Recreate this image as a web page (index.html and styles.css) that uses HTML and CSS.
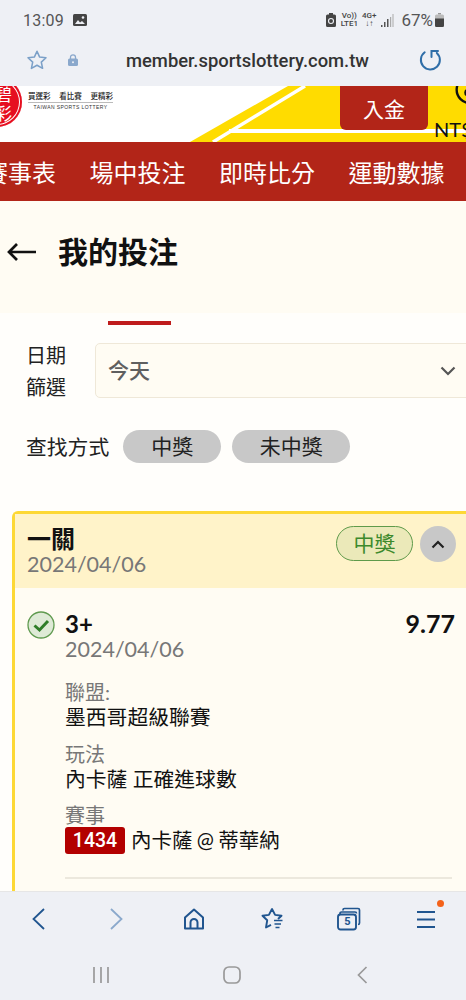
FILE: index.html
```html
<!DOCTYPE html>
<html lang="zh-TW">
<head>
<meta charset="utf-8">
<title>我的投注</title>
<link rel="stylesheet" href="styles.css">
</head>
<body>
<div class="screen">
  <header class="chrome-top">
    <div class="status">
      <span class="clock">13:09</span>
      <svg class="pic" viewBox="0 0 14 12"><rect width="14" height="12" rx="1.5" fill="#444"/><path d="M2 10l3-4 2 2.5 2-1.5 3 3z" fill="#eef0f5"/><circle cx="10" cy="3.5" r="1.3" fill="#eef0f5"/></svg>
      <span class="status-right">
        <svg class="saver" viewBox="0 0 10 14"><path d="M3 0h4v1.500h1.500a1.500 1.500 0 0 1 1.500 1.500v9.500a1.500 1.500 0 0 1-1.500 1.500h-7a1.500 1.500 0 0 1-1.500-1.500v-9.500a1.500 1.500 0 0 1 1.500-1.500h1.500z" fill="#444"/><circle cx="5" cy="8" r="2.500" fill="none" stroke="#eef0f5" stroke-width="1.100"/></svg>
        <span class="net">Vo))<br>LTE1</span>
        <span class="net">4G+<br>↓↑</span>
        <svg class="signal" viewBox="0 0 13 13"><path d="M0 13v-2h1.500v2zM3 13v-5h1.500v5zM6 13v-8h1.500v8z" fill="#555"/><path d="M9 13v-10h1.200v10zM11.500 13v-13h1v13z" fill="#aaa"/></svg>
        <span class="pct">67%</span>
        <svg class="battery" viewBox="0 0 9 14"><path d="M3 0h3v1.500h-3z" fill="#999"/><rect y="1.500" width="9" height="12.500" rx="1.500" fill="#bbb"/><path d="M0 5.500h9v7a1.500 1.500 0 0 1-1.500 1.500h-6a1.500 1.500 0 0 1-1.500-1.500z" fill="#444"/></svg>
      </span>
    </div>
    <div class="urlbar">
      <svg class="star" viewBox="0 0 24 24"><path d="M12 2.500l2.900 6.300 6.900.8-5.100 4.700 1.400 6.800-6.100-3.400-6.100 3.400 1.400-6.800-5.100-4.700 6.900-.8z" fill="none" stroke="#7ba0c8" stroke-width="1.700" stroke-linejoin="round"/></svg>
      <svg class="lock" viewBox="0 0 10 12"><path d="M2.500 5V3.300a2.500 2.500 0 0 1 5 0V5" fill="none" stroke="#8aa8cc" stroke-width="1.300"/><rect y="4.500" width="10" height="7.500" rx="1.500" fill="#8aa8cc"/><circle cx="5" cy="8.200" r="1" fill="#eef0f5"/></svg>
      <span class="url">member.sportslottery.com.tw</span>
      <svg class="reload" viewBox="0 0 22 22"><path d="M5.700 3.300A9.500 9.500 0 1 0 17.800 3.900" fill="none" stroke="#2f6ea8" stroke-width="2" stroke-linecap="round"/><path d="M19 2H12.500V8" fill="none" stroke="#2f6ea8" stroke-width="2" stroke-linecap="round"/></svg>
    </div>
  </header>

  <main class="page">
    <section class="banner">
      <svg class="banner-bg" viewBox="0 0 466 56" preserveAspectRatio="none">
        <path d="M288 0H466V56H190z" fill="#ffdc00"/>
        <path d="M305 0L213 56" stroke="#fff" stroke-width="3.500"/>
        <path d="M229 45H466" stroke="#fff" stroke-width="4"/>
      </svg>
      <div class="seal"><span>碧</span><span>彩</span></div>
      <div class="brand">
        <div class="brand-zh"><span>買運彩</span><span>看比賽</span><span>更精彩</span></div>
        <div class="brand-en">TAIWAN SPORTS LOTTERY</div>
      </div>
      <button class="deposit">入金</button>
      <div class="wallet">
        <svg class="wallet-icon" viewBox="0 0 30 20"><circle cx="16" cy="4" r="14" fill="none" stroke="#111" stroke-width="2.500"/><circle cx="14" cy="7" r="4" fill="#111"/></svg>
        <span class="amount">NT$</span>
      </div>
    </section>

    <nav class="mainnav">
      <a>賽事表</a><a>場中投注</a><a>即時比分</a><a>運動數據</a>
    </nav>

    <section class="title-row">
      <svg class="back-arrow" viewBox="0 0 30 20"><path d="M29 10H2M10 2l-8 8 8 8" fill="none" stroke="#111" stroke-width="2.700"/></svg>
      <h1>我的投注</h1>
    </section>

    <div class="tab-mark"></div>

    <section class="filter">
      <label class="filter-label">日期<br>篩選</label>
      <div class="select">
        <span class="select-value">今天</span>
        <svg class="select-chev" viewBox="0 0 16 10"><path d="M1.500 1.500L8 8l6.500-6.500" fill="none" stroke="#555" stroke-width="2.200"/></svg>
      </div>
    </section>

    <section class="search">
      <span class="search-label">查找方式</span>
      <span class="pill pill-win">中獎</span>
      <span class="pill pill-lose">未中獎</span>
    </section>

    <article class="card">
      <div class="card-head">
        <div class="card-title">
          <strong>一關</strong>
          <span class="date">2024/04/06</span>
        </div>
        <span class="won">中獎</span>
        <span class="toggle"><svg viewBox="0 0 14 9"><path d="M1.500 7.500L7 2l5.500 5.500" fill="none" stroke="#222" stroke-width="2.200"/></svg></span>
      </div>
      <div class="card-body">
        <div class="bet">
          <svg class="check" viewBox="0 0 28 28"><circle cx="14" cy="14" r="13" fill="#deead6" stroke="#5f9a4f" stroke-width="1.300"/><path d="M7.500 14.500l5 4.500 8.500-9" fill="none" stroke="#2f7d28" stroke-width="3"/></svg>
          <div class="bet-main">
            <div class="bet-top"><b class="pick">3+</b><b class="odds">9.77</b></div>
            <span class="date">2024/04/06</span>
            <dl class="details">
              <dt>聯盟:</dt>
              <dd>墨西哥超級聯賽</dd>
              <dt>玩法</dt>
              <dd>內卡薩 正確進球數</dd>
              <dt>賽事</dt>
              <dd class="match"><span class="code">1434</span>內卡薩 @ 蒂華納</dd>
            </dl>
            <hr class="rule">
          </div>
        </div>
      </div>
    </article>
  </main>

  <footer class="chrome-bottom">
    <div class="toolbar">
      <svg class="tool" viewBox="0 0 24 24"><path d="M17 2L6.500 12 17 22" fill="none" stroke="#20558f" stroke-width="1.800"/></svg>
      <svg class="tool" viewBox="0 0 24 24"><path d="M7 2l10.500 10L7 22" fill="none" stroke="#8ba9cc" stroke-width="1.800"/></svg>
      <svg class="tool" viewBox="0 0 24 24"><path d="M3 21.500V10.500L12 2.500l9 8v11z" fill="none" stroke="#20558f" stroke-width="2" stroke-linejoin="round"/><path d="M8.500 21.500v-6a3.500 3.500 0 0 1 7 0v6" fill="none" stroke="#20558f" stroke-width="2"/></svg>
      <svg class="tool" viewBox="0 0 24 24"><path d="M18 12l3.500-3.300-6.400-.8L12 2 8.900 7.900l-6.400.8 4.700 4.600-1.200 7.200 5-2.600" fill="none" stroke="#20558f" stroke-width="1.900" stroke-linejoin="round"/><path d="M14 13.500h8.500M14.500 17h6.500M15.500 20.500h4" stroke="#20558f" stroke-width="1.700"/></svg>
      <span class="tool tabs">
        <svg viewBox="0 0 24 24"><path d="M6 3.500V3a1.500 1.500 0 0 1 1.500-1.500h13.500a1.500 1.500 0 0 1 1.500 1.500v13a1.500 1.500 0 0 1-1.500 1.500M3 7v-.5a1.500 1.500 0 0 1 1.500-1.500h13.500a1.500 1.500 0 0 1 1.500 1.500" fill="none" stroke="#20558f" stroke-width="1.700"/><rect x="1" y="7.500" width="18" height="15" rx="2.500" fill="none" stroke="#20558f" stroke-width="1.900"/></svg>
        <span class="tabs-count">5</span>
      </span>
      <span class="tool menu">
        <svg viewBox="0 0 24 24"><path d="M2 5h18M2 12.500h18M2 20h18" stroke="#20558f" stroke-width="1.900"/></svg>
        <i class="dot"></i>
      </span>
    </div>
    <div class="sysnav">
      <svg class="sys" viewBox="0 0 18 18"><path d="M2 1v16M9 1v16M16 1v16" stroke="#999" stroke-width="1.700"/></svg>
      <svg class="sys" viewBox="0 0 18 18"><rect x="1" y="1" width="16" height="16" rx="5" fill="none" stroke="#999" stroke-width="1.700"/></svg>
      <svg class="sys" viewBox="0 0 18 18"><path d="M12.500 1L4.500 9l8 8" fill="none" stroke="#999" stroke-width="1.700"/></svg>
    </div>
  </footer>
</div>
</body>
</html>
```

FILE: styles.css
```css
* { box-sizing: border-box; }
html, body { margin: 0; padding: 0; }
body {
  width: 466px;
  height: 1000px;
  overflow: hidden;
  background: #fff;
  font-family: Lato, "Noto Sans CJK TC", sans-serif;
  color: #111;
}
.screen { width: 466px; height: 1000px; display: flex; flex-direction: column; overflow: hidden; }

/* browser top */
.chrome-top { height: 86px; flex: none; background: #eef0f5; font-family: Roboto, sans-serif; }
.status { height: 40px; display: flex; align-items: center; padding: 0 22px 0 23px; color: #555; }
.clock { font-size: 16px; letter-spacing: .2px; }
.pic { width: 14px; height: 12px; margin-left: 9px; }
.status-right { margin-left: auto; display: flex; align-items: center; }
.saver { width: 10px; height: 14px; margin-right: 5px; }
.net { font-size: 8px; line-height: 8px; color: #444; text-align: center; margin-right: 4px; font-weight: 500; }
.signal { width: 13px; height: 13px; margin: 0 7px 0 1px; }
.pct { font-size: 17px; color: #555; }
.battery { width: 9px; height: 14px; margin-left: 2px; }
.urlbar { height: 40px; display: flex; align-items: center; padding: 0 25px 0 26px; }
.star { width: 22px; height: 22px; flex: none; }
.lock { width: 10px; height: 12px; margin-left: 20px; flex: none; }
.url { margin-left: 48px; font-size: 18.400px; font-weight: 500; color: #333; white-space: nowrap; }
.reload { width: 22px; height: 22px; margin-left: auto; flex: none; }

/* page */
.page { flex: 1; min-height: 0; overflow: hidden; background: #fffefb; }

.banner { position: relative; height: 56px; display: flex; background: #fff; overflow: hidden; }
.banner-bg { position: absolute; left: 0; top: 0; width: 466px; height: 56px; }
.seal {
  position: absolute; left: -28px; top: -9px;
  width: 50px; height: 50px; border-radius: 50%;
  background: #e60f20; color: #fff;
  box-shadow: inset 0 0 0 2px #e60f20, inset 0 0 0 3px #fff;
  display: flex; flex-direction: column; align-items: flex-end; justify-content: center;
  font-size: 17px; line-height: 19px; padding: 4px 10px 0 0;
}
.brand { position: relative; margin: 5px 0 0 28px; width: 85px; flex: none; }
.brand-zh { display: flex; justify-content: space-between; font-size: 7.500px; line-height: 11px; border-bottom: 1px solid #bbb; height: 12px; color: #222; font-weight: 500; }
.brand-en { font-family: "Liberation Sans", sans-serif; font-size: 5px; line-height: 8px; letter-spacing: .42px; text-align: center; color: #333; white-space: nowrap; }
.deposit {
  position: relative; margin-left: 227px; flex: none;
  width: 88px; height: 44px; border: 0; padding: 0;
  border-radius: 0 0 6px 6px; background: #b22518; color: #fff;
  font-family: "Noto Sans CJK TC", sans-serif; font-size: 21px;
}
.wallet { position: relative; margin-left: 6px; flex: none; width: 60px; display: flex; flex-direction: column; }
.wallet-icon { width: 30px; height: 19px; margin-left: 20px; flex: none; }
.amount { font-family: Lato, sans-serif; font-size: 20px; line-height: 24px; margin-top: 12px; color: #111; }

.mainnav {
  height: 59px; background: #b22518; display: flex; gap: 33.500px; align-items: center;
  overflow: hidden; white-space: nowrap;
  color: #fff; font-size: 24px; font-family: "Noto Sans CJK TC", sans-serif; font-weight: 400;
}
.mainnav a { flex: none; }
.mainnav a:first-child { margin-left: -16px; }

.title-row { height: 112px; background: #fffcf3; display: flex; align-items: center; padding: 0 0 14px 7px; }
.back-arrow { width: 30px; height: 20px; flex: none; margin-top: 4px; }
.title-row h1 { margin: 0 0 0 21px; font-size: 30px; line-height: 40px; font-weight: 700; font-family: "Noto Sans CJK TC", sans-serif; color: #111; }

.tab-mark { width: 63px; height: 4px; margin: 8px 0 0 108px; background: #bf1c1c; }

.filter { display: flex; align-items: center; margin: 18px 0 0 26px; gap: 29px; height: 55px; }
.filter-label { font-size: 20px; line-height: 32px; color: #222; white-space: nowrap; }
.select {
  flex: none; width: 380px; height: 55px; background: #fffcf3;
  border: 1px solid #efe8d8; border-radius: 5px;
  display: flex; align-items: center; padding-left: 12px;
  font-size: 21px; font-weight: 500; color: #5f5f5f;
}
.select-value { margin-top: -3px; }
.select-chev { width: 16px; height: 10px; margin-left: 290px; flex: none; }

.search { display: flex; align-items: center; margin: 31px 0 0 26px; height: 34px; }
.search-label { font-size: 20.800px; color: #222; margin-right: 14px; white-space: nowrap; }
.pill {
  height: 33px; border-radius: 17px; background: #c8c8c8; color: #222;
  font-size: 21px; line-height: 32px; text-align: center; margin-right: 11px;
}
.pill-win { width: 98px; }
.pill-lose { width: 118px; }

.card {
  margin: 48px 0 0 12px; width: 470px;
  border: 3px solid #fdd835; border-radius: 6px 0 0 0; border-right: 0; border-bottom: 0;
  background: #fffcf3;
}
.card-head { height: 74px; background: #fff3c9; display: flex; align-items: flex-start; padding: 12px 0 0 12px; }
.card-title { width: 309px; flex: none; display: flex; flex-direction: column; margin-top: -1px; }
.card-title strong { font-size: 24px; line-height: 25px; font-weight: 700; font-family: "Noto Sans CJK TC", sans-serif; }
.card-title .date { margin-top: 1px; }
.date { display: block; font-family: Lato, sans-serif; font-size: 21.500px; line-height: 26px; color: #777; }
.won {
  width: 77px; height: 35px; border: 1px solid #5f9a4a; border-radius: 18px;
  background: #ebe9b9; color: #3d8a2d; font-size: 21px; line-height: 32px; text-align: center; flex: none;
}
.toggle { margin-left: 7px; width: 36px; height: 36px; border-radius: 50%; background: #c8c8c8; display: flex; align-items: center; justify-content: center; flex: none; }
.toggle svg { width: 14px; height: 9px; }

.card-body { padding: 22px 0 40px 12px; }
.bet { display: flex; }
.check { width: 28px; height: 28px; flex: none; margin: 1px 10px 0 0; }
.bet-main { width: 390px; flex: none; }
.bet-top { display: flex; align-items: center; justify-content: space-between; height: 26px; }
.pick { font-size: 24px; font-weight: 700; color: #111; font-family: Lato, sans-serif; }
.odds { font-size: 25px; font-weight: 700; color: #111; font-family: Lato, sans-serif; }
.details { margin: 16px 0 0; }
.details dt { font-size: 20px; line-height: 22px; padding-top: 3px; color: #777; }
.details dd { margin: 0 0 9.500px; font-size: 20.800px; line-height: 27px; color: #111; white-space: nowrap; }
.details .match { display: flex; align-items: center; margin-top: 1px; font-size: 20.500px; word-spacing: -1px; }
.code {
  width: 60px; height: 27px; border-radius: 3px; background: #b30000; color: #fff;
  font-family: Roboto, sans-serif; font-size: 19.500px; font-weight: 500; line-height: 27px;
  text-align: center; margin-right: 6px; flex: none;
}
.rule { margin: 23px 3px 0 0; width: 387px; border: 0; border-top: 2px solid #ece8dd; }

/* browser bottom */
.chrome-bottom { height: 109px; flex: none; background: #eef0f5; border-top: 1px solid #e6e6e6; }
.toolbar { display: grid; grid-template-columns: repeat(6, 1fr); height: 54px; align-items: center; justify-items: center; }
.tool { display: block; width: 24px; height: 24px; position: relative; }
.tool svg { display: block; width: 24px; height: 24px; }
.tabs-count { position: absolute; left: 1px; top: 8px; width: 18px; text-align: center; font-family: Roboto, sans-serif; font-size: 11px; line-height: 14px; font-weight: 700; color: #20558f; }
.dot { position: absolute; right: -5px; top: -7px; width: 7px; height: 7px; border-radius: 50%; background: #f4621a; }
.sysnav { display: grid; grid-template-columns: repeat(3, 131px); padding: 20px 0 0 35px; justify-items: center; }
.sys { width: 18px; height: 18px; display: block; }
```
